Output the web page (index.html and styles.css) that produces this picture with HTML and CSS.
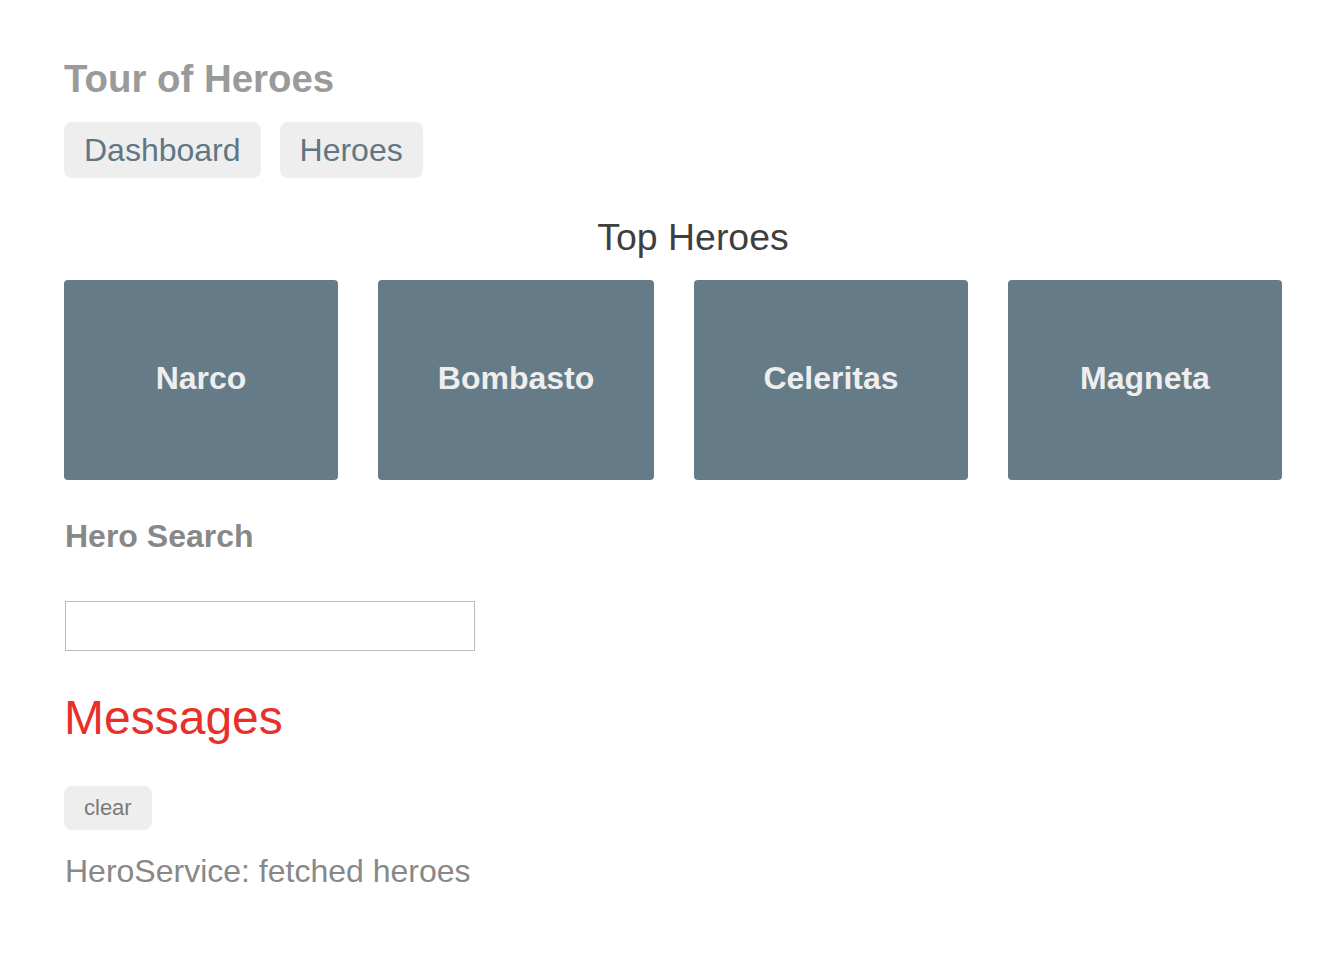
FILE: index.html
```html
<!DOCTYPE html>
<html lang="en">
<head>
<meta charset="utf-8">
<title>Tour of Heroes</title>
<link rel="stylesheet" href="styles.css">
</head>
<body>
<div class="app">
  <h1 class="title">Tour of Heroes</h1>
  <nav class="nav">
    <a class="nav-link" href="#">Dashboard</a>
    <a class="nav-link" href="#">Heroes</a>
  </nav>
  <h3 class="top-heading">Top Heroes</h3>
  <div class="grid">
    <a class="module" href="#"><h4 class="module-name">Narco</h4></a>
    <a class="module" href="#"><h4 class="module-name">Bombasto</h4></a>
    <a class="module" href="#"><h4 class="module-name">Celeritas</h4></a>
    <a class="module" href="#"><h4 class="module-name">Magneta</h4></a>
  </div>
  <h4 class="search-heading">Hero Search</h4>
  <input class="search-box" type="text">
  <h2 class="messages-heading">Messages</h2>
  <button class="clear">clear</button>
  <div class="message">HeroService: fetched heroes</div>
</div>
</body>
</html>
```

FILE: styles.css
```css
* { box-sizing: border-box; }

body {
  margin: 0;
  background: #fff;
  font-family: "Liberation Sans", Arial, Helvetica, sans-serif;
  line-height: 1.15;
}

.app {
  padding: 57px 64px 40px 64px;
}

.title {
  margin: 0;
  font-size: 38.4px;
  font-weight: bold;
  color: #9a9a9a;
  line-height: 44px;
}

.nav {
  display: flex;
  gap: 19px;
  margin-top: 21px;
}

.nav-link {
  display: inline-block;
  background: #eeeeee;
  color: #5f7784;
  text-decoration: none;
  font-size: 32px;
  line-height: 36px;
  padding: 10px 20px;
  border-radius: 8px;
}

.top-heading {
  margin: 38px 0 0 0;
  text-align: center;
  font-size: 37.44px;
  font-weight: normal;
  color: #3f3f3f;
  line-height: 43px;
  width: 1258px;
}

.grid {
  display: grid;
  grid-template-columns: 274px 276px 274px 274px;
  gap: 40px;
  margin-top: 21px;
}

.module {
  display: block;
  height: 200px;
  background: #657b87;
  border-radius: 4px;
  text-decoration: none;
  padding-top: 80px;
  text-align: center;
}

.module-name {
  margin: 0;
  color: #eeeeee;
  font-size: 32px;
  font-weight: bold;
  line-height: 37px;
}

.search-heading {
  margin: 38px 0 0 0;
  font-size: 32px;
  font-weight: bold;
  color: #888888;
  line-height: 37px;
  padding-left: 1px;
}

.search-box {
  display: block;
  margin: 46px 0 0 1px;
  width: 410px;
  height: 50px;
  border: 1px solid #bdbdbd;
  font-size: 26px;
  padding: 2px 4px;
  outline: none;
}

.messages-heading {
  margin: 39px 0 0 0;
  font-size: 48px;
  font-weight: normal;
  color: #e8302a;
  line-height: 56px;
}

.clear {
  display: block;
  margin-top: 40px;
  height: 44px;
  padding: 0 20px;
  border: none;
  border-radius: 8px;
  background: #eeeeee;
  color: #7a7a7a;
  font-family: "Liberation Sans", Arial, Helvetica, sans-serif;
  font-size: 22px;
  line-height: 44px;
}

.message {
  margin-top: 23px;
  font-size: 32px;
  color: #888888;
  line-height: 37px;
  padding-left: 1px;
}
```
